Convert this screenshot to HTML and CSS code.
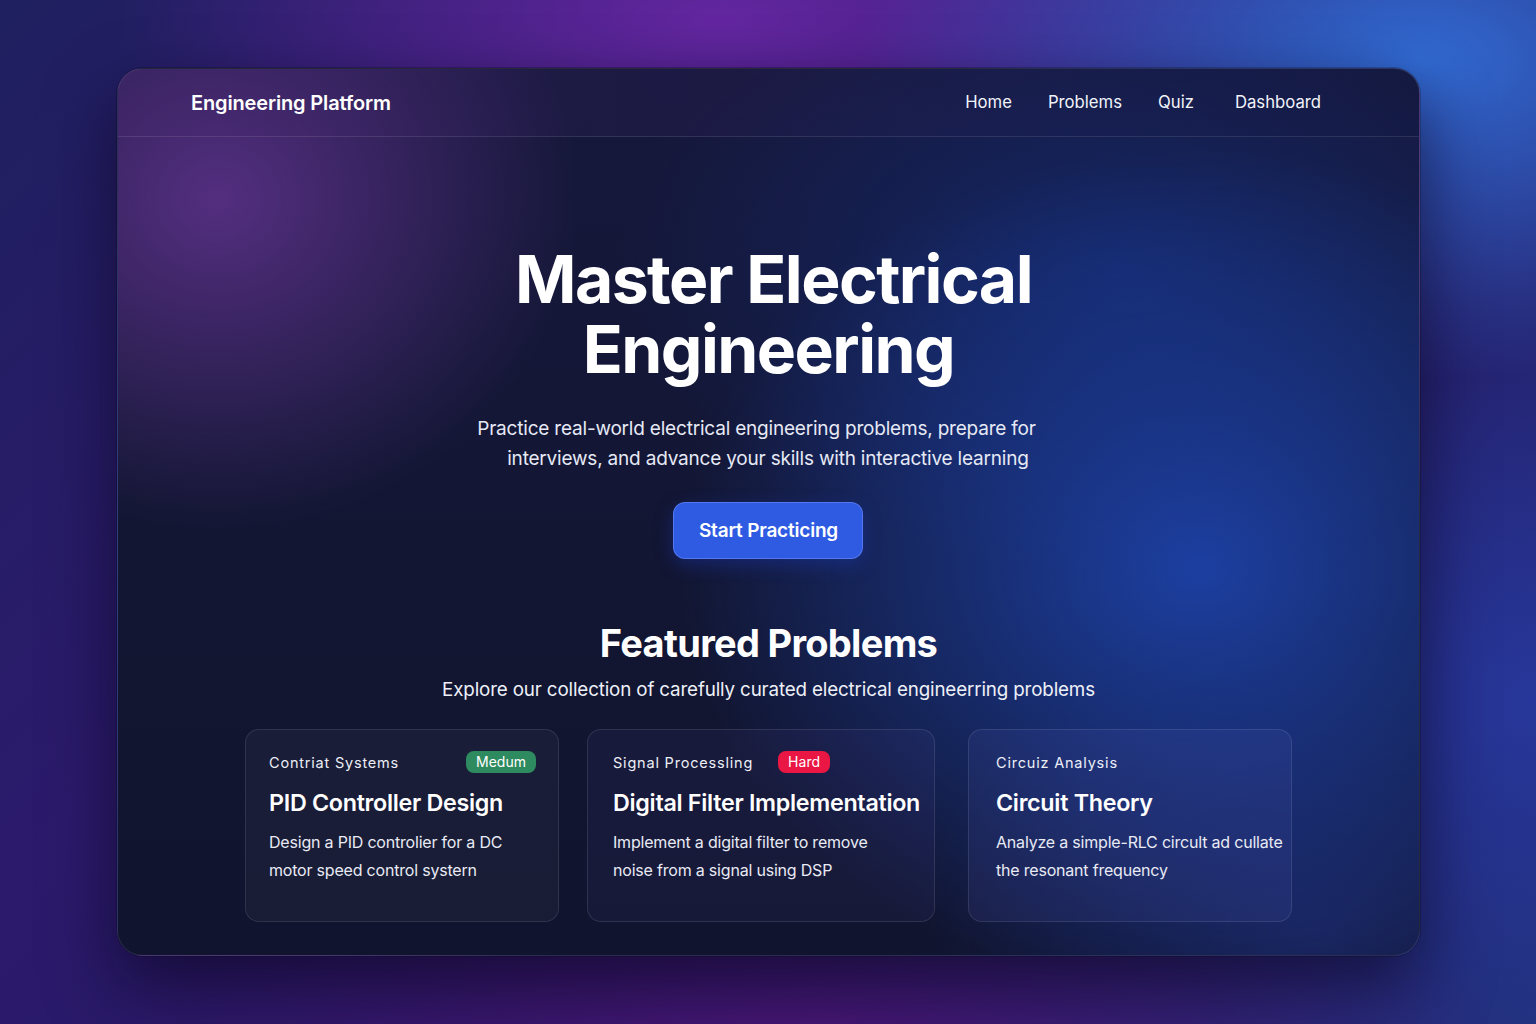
FILE: index.html
```html
<!DOCTYPE html>
<html lang="en">
<head>
<meta charset="utf-8">
<title>Engineering Platform</title>
<link rel="stylesheet" href="styles.css">
</head>
<body>
<div class="stage">
  <div class="window">
    <header class="topbar">
      <div class="brand">Engineering Platform</div>
      <nav class="nav">
        <a class="nav-link nav-home">Home</a>
        <a class="nav-link nav-problems">Problems</a>
        <a class="nav-link nav-quiz">Quiz</a>
        <a class="nav-link nav-dash">Dashboard</a>
      </nav>
    </header>
    <main class="content">
      <section class="hero">
        <h1 class="hero-title"><span class="hero-line">Master Electrical</span><span class="hero-line">Engineering</span></h1>
        <p class="hero-sub">Practice real-world electrical engineering problems, prepare for<br><span class="indent">interviews, and advance your skills with interactive learning</span></p>
        <button class="cta">Start Practicing</button>
      </section>
      <section class="featured">
        <h2 class="featured-title">Featured Problems</h2>
        <p class="featured-sub">Explore our collection of carefully curated electrical engineerring problems</p>
        <div class="cards">
          <article class="card card-a">
            <div class="card-top">
              <span class="cat">Contriat Systems</span>
              <span class="badge badge-medium">Medum</span>
            </div>
            <h3 class="card-title">PID Controller Design</h3>
            <p class="card-desc">Design a PID controlier for a DC<br>motor speed control systern</p>
          </article>
          <article class="card card-b">
            <div class="card-top">
              <span class="cat">Signal Processling</span>
              <span class="badge badge-hard">Hard</span>
            </div>
            <h3 class="card-title">Digital Filter Implementation</h3>
            <p class="card-desc">Implement a digital filter to remove<br>noise from a signal using DSP</p>
          </article>
          <article class="card card-c">
            <div class="card-top">
              <span class="cat">Circuiz Analysis</span>
            </div>
            <h3 class="card-title">Circuit Theory</h3>
            <p class="card-desc">Analyze a simple-RLC circult ad cullate<br>the resonant frequency</p>
          </article>
        </div>
      </section>
    </main>
  </div>
</div>
</body>
</html>
```

FILE: styles.css
```css
* { box-sizing: border-box; }
html, body {
  margin: 0;
  padding: 0;
  width: 1536px;
  height: 1024px;
  overflow: hidden;
}
body {
  font-family: Inter, "Noto Sans", "Liberation Sans", sans-serif;
  color: #fff;
  background:
    radial-gradient(ellipse 560px 320px at 1420px 60px, rgba(50,110,215,0.95), rgba(50,110,215,0) 100%),
    radial-gradient(ellipse 600px 240px at 720px 20px, rgba(110,40,170,0.85), rgba(110,40,170,0) 100%),
    radial-gradient(ellipse 700px 160px at 800px 1024px, rgba(80,20,120,0.8), rgba(80,20,120,0) 100%),
    radial-gradient(ellipse 500px 400px at 1536px 700px, rgba(40,60,170,0.7), rgba(40,60,170,0) 100%),
    linear-gradient(135deg, #1f2060 0%, #2c1a6c 35%, #261a66 60%, #22307a 100%);
}
.stage {
  padding: 68px 116px 0 117px;
}
.window {
  width: 1303px;
  height: 888px;
  border-radius: 26px;
  border: 1px solid rgba(255,255,255,0.09);
  overflow: hidden;
  box-shadow: 0 30px 70px rgba(10,5,30,0.65), 0 0 0 1px rgba(0,0,0,0.2);
  background:
    radial-gradient(ellipse 360px 330px at 100px 130px, rgba(95,50,140,0.85), rgba(95,50,140,0) 100%),
    radial-gradient(ellipse 520px 420px at 1080px 500px, rgba(30,70,180,0.85), rgba(30,70,180,0) 100%),
    radial-gradient(ellipse 500px 300px at 1000px 200px, rgba(20,45,120,0.7), rgba(20,45,120,0) 100%),
    radial-gradient(ellipse 400px 300px at 1200px 860px, rgba(30,45,120,0.6), rgba(30,45,120,0) 100%),
    linear-gradient(180deg, #16183c 0%, #121632 60%, #10142e 100%);
}
.topbar {
  height: 68px;
  display: flex;
  align-items: center;
  justify-content: space-between;
  padding: 0 98px 0 73px;
  border-bottom: 1px solid rgba(255,255,255,0.1);
  background: linear-gradient(90deg, rgba(70,40,110,0.25), rgba(10,20,60,0.15));
}
.brand {
  font-size: 20px;
  font-weight: 600;
  letter-spacing: -0.15px;
}
.nav {
  display: flex;
  align-items: center;
  margin-top: -2px;
}
.nav-link {
  font-size: 16.7px;
  color: #f1f3fa;
  text-decoration: none;
}
.nav-home { margin-right: 36px; }
.nav-problems { margin-right: 36px; }
.nav-quiz { margin-right: 41px; }
.content {
  display: flex;
  flex-direction: column;
  align-items: center;
}
.hero {
  display: flex;
  flex-direction: column;
  align-items: center;
  padding-top: 107px;
}
.hero-title {
  margin: 0;
  font-size: 66px;
  font-weight: 700;
  letter-spacing: -1.55px;
  text-align: center;
  display: flex;
  flex-direction: column;
  align-items: center;
}
.hero-line {
  display: block;
  height: 70px;
  line-height: 70px;
}
.hero-line:first-child { padding-left: 10px; }
.hero-sub {
  margin: 30px 24px 0 0;
  font-size: 19px;
  line-height: 30px;
  text-align: left;
  color: #e6e9f5;
  letter-spacing: -0.2px;
}
.indent { padding-left: 30px; }
.cta {
  margin-top: 28px;
  width: 190px;
  height: 57px;
  border: 1px solid rgba(120,150,255,0.5);
  border-radius: 12px;
  background: #2f5be2;
  color: #fff;
  font-family: inherit;
  font-size: 19px;
  font-weight: 600;
  letter-spacing: -0.2px;
  box-shadow: 0 6px 18px rgba(30,60,200,0.35);
}
.featured {
  display: flex;
  flex-direction: column;
  align-items: center;
  padding-top: 62px;
}
.featured-title {
  margin: 0;
  font-size: 38px;
  line-height: 44px;
  font-weight: 700;
  letter-spacing: -0.7px;
}
.featured-sub {
  margin: 12px 0 0;
  font-size: 18.8px;
  line-height: 26px;
  color: #eef0f8;
  letter-spacing: -0.15px;
}
.cards {
  margin-top: 26px;
  display: flex;
}
.card {
  height: 193px;
  border-radius: 14px;
  border: 1px solid rgba(255,255,255,0.1);
  background: rgba(255,255,255,0.035);
  padding: 20px 0 0 23px;
}
.card-a { width: 314px; margin-right: 28px; padding-right: 22px; }
.card-b { width: 348px; margin-right: 33px; padding-left: 25px; background: rgba(120,90,190,0.08); }
.card-c { width: 324px; padding-left: 27px; background: rgba(110,110,220,0.1); }
.card-top {
  display: flex;
  align-items: center;
  height: 24px;
}
.card-a .card-top { justify-content: space-between; }
.card-b .badge { margin-left: 25px; }
.cat {
  font-size: 14.5px;
  letter-spacing: 0.8px;
  color: #eceef6;
}
.badge {
  font-size: 14px;
  line-height: 20px;
  padding: 1px 10px;
  border-radius: 8px;
  color: #fff;
}
.badge-medium { background: #2e8a5f; }
.badge-hard { background: #ea1744; }
.card-title {
  margin: 14px 0 0;
  font-size: 23.3px;
  line-height: 30px;
  font-weight: 600;
  letter-spacing: -0.3px;
  white-space: nowrap;
}
.card-desc {
  margin: 10px 0 0;
  font-size: 16px;
  line-height: 28px;
  color: #e8eaf4;
  letter-spacing: -0.2px;
  white-space: nowrap;
}
```
